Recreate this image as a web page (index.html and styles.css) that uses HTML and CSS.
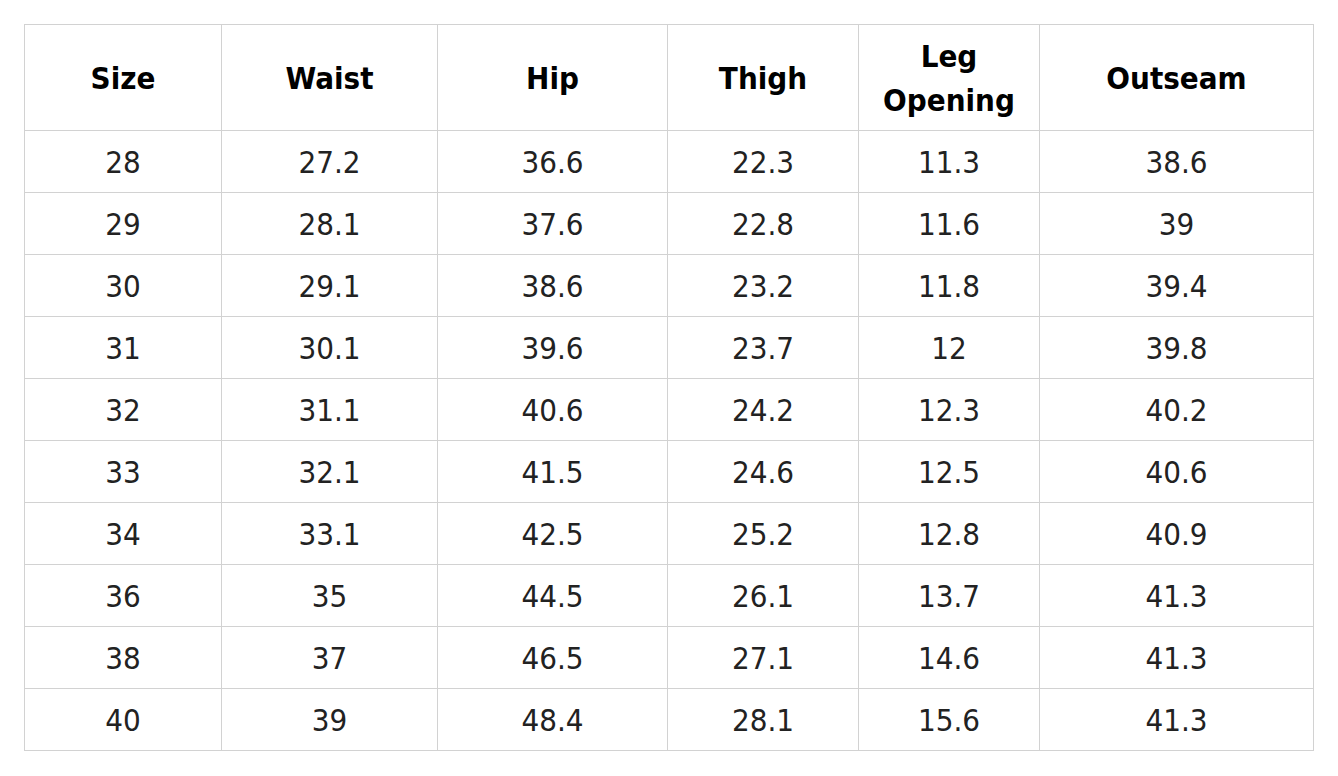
FILE: index.html
```html
<!DOCTYPE html>
<html>
<head>
<meta charset="utf-8">
<link rel="stylesheet" href="styles.css">
</head>
<body>
<div class="page">
<table class="sizes">
<colgroup>
<col class="c1"><col class="c2"><col class="c3"><col class="c4"><col class="c5"><col class="c6">
</colgroup>
<thead>
<tr><th>Size</th><th>Waist</th><th>Hip</th><th>Thigh</th><th>Leg<br>Opening</th><th>Outseam</th></tr>
</thead>
<tbody>
<tr><td>28</td><td>27.2</td><td>36.6</td><td>22.3</td><td>11.3</td><td>38.6</td></tr>
<tr><td>29</td><td>28.1</td><td>37.6</td><td>22.8</td><td>11.6</td><td>39</td></tr>
<tr><td>30</td><td>29.1</td><td>38.6</td><td>23.2</td><td>11.8</td><td>39.4</td></tr>
<tr><td>31</td><td>30.1</td><td>39.6</td><td>23.7</td><td>12</td><td>39.8</td></tr>
<tr><td>32</td><td>31.1</td><td>40.6</td><td>24.2</td><td>12.3</td><td>40.2</td></tr>
<tr><td>33</td><td>32.1</td><td>41.5</td><td>24.6</td><td>12.5</td><td>40.6</td></tr>
<tr><td>34</td><td>33.1</td><td>42.5</td><td>25.2</td><td>12.8</td><td>40.9</td></tr>
<tr><td>36</td><td>35</td><td>44.5</td><td>26.1</td><td>13.7</td><td>41.3</td></tr>
<tr><td>38</td><td>37</td><td>46.5</td><td>27.1</td><td>14.6</td><td>41.3</td></tr>
<tr><td>40</td><td>39</td><td>48.4</td><td>28.1</td><td>15.6</td><td>41.3</td></tr>
</tbody>
</table>
</div>
</body>
</html>
```
FILE: styles.css
```css
html, body {
  margin: 0;
  padding: 0;
  background: #ffffff;
}
.page {
  padding: 24px 0 0 24px;
}
.sizes {
  border-collapse: collapse;
  table-layout: fixed;
  width: 1289px;
  font-family: "DejaVu Sans Condensed", "DejaVu Sans", sans-serif;
  font-stretch: condensed;
  color: #222222;
}
.c1 { width: 197px; }
.c2 { width: 216px; }
.c3 { width: 230px; }
.c4 { width: 191px; }
.c5 { width: 181px; }
.c6 { width: 274px; }
.sizes th, .sizes td {
  border: 1px solid #d2d2d2;
  text-align: center;
  vertical-align: middle;
  padding: 0;
}
.sizes th {
  height: 105px;
  font-size: 31px;
  font-weight: bold;
  line-height: 44px;
  color: #000000;
}
.sizes td {
  height: 61px;
  font-size: 31px;
  line-height: 36px;
}
```
